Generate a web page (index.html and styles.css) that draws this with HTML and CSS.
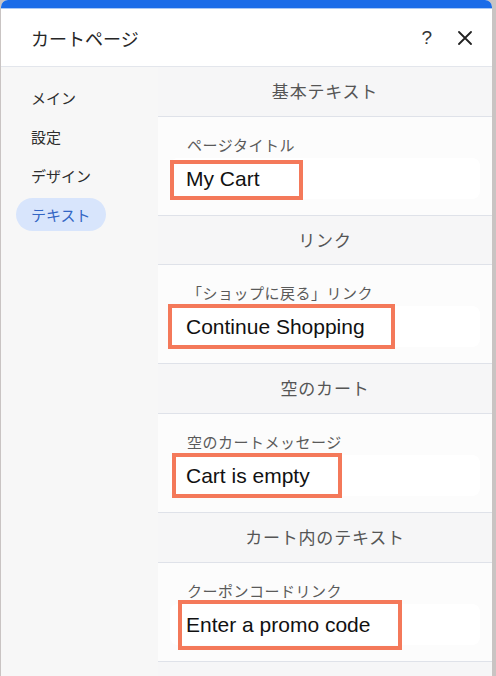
FILE: index.html
```html
<!DOCTYPE html>
<html lang="ja">
<head>
    <meta charset="UTF-8">
    <meta name="viewport" content="width=device-width, initial-scale=1.0">
    <title>カートページ</title>
    <link rel="stylesheet" href="styles.css">
</head>
<body>
    <div class="panel">
        <div class="panel-bar"></div>

        <div class="header">
            <h1 class="title">カートページ</h1>
            <div class="header-actions">
                <span class="help">?</span>
                <svg class="close" width="14" height="14" viewBox="0 0 14 14">
                    <path d="M1 1 L13 13 M13 1 L1 13" stroke="#222" stroke-width="1.8" stroke-linecap="round"/>
                </svg>
            </div>
        </div>

        <div class="content">
            <ul class="nav">
                <li class="nav-item">メイン</li>
                <li class="nav-item">設定</li>
                <li class="nav-item">デザイン</li>
                <li class="nav-item active">テキスト</li>
            </ul>

            <div class="sections">
                <div class="section-title">基本テキスト</div>
                <div class="field-row">
                    <div class="field-label">ページタイトル</div>
                    <div class="field">
                        My Cart
                        <span class="mark mark-1"></span>
                    </div>
                </div>

                <div class="section-title">リンク</div>
                <div class="field-row">
                    <div class="field-label">「ショップに戻る」リンク</div>
                    <div class="field">
                        Continue Shopping
                        <span class="mark mark-2"></span>
                    </div>
                </div>

                <div class="section-title">空のカート</div>
                <div class="field-row">
                    <div class="field-label">空のカートメッセージ</div>
                    <div class="field">
                        Cart is empty
                        <span class="mark mark-3"></span>
                    </div>
                </div>

                <div class="section-title">カート内のテキスト</div>
                <div class="field-row">
                    <div class="field-label">クーポンコードリンク</div>
                    <div class="field">
                        Enter a promo code
                        <span class="mark mark-4"></span>
                    </div>
                </div>

                <div class="section-title"></div>
            </div>
        </div>
    </div>
</body>
</html>
```

FILE: styles.css
```css
body {
    margin: 0;
    background-color: #c9c4c3;
    font-family: "Noto Sans CJK JP", "Liberation Sans", sans-serif;
    overflow: hidden;
}
.panel {
    margin-left: 1px;
    width: 491px;
    height: 676px;
    background-color: white;
    border-radius: 7px 7px 0 0;
    overflow: hidden;
    display: flex;
    flex-direction: column;
}
.panel-bar {
    flex-shrink: 0;
    height: 8px;
    background-color: #1b6ce8;
    border-bottom: 1px solid #a9c8f5;
}
.header {
    flex-shrink: 0;
    height: 57px;
    display: flex;
    align-items: center;
    justify-content: space-between;
    padding: 0 20px 0 30px;
    border-bottom: 1px solid #e3e6ec;
}
.title {
    margin: 0;
    font-size: 18px;
    font-weight: normal;
    color: #262626;
}
.header-actions {
    display: flex;
    align-items: center;
    gap: 26px;
}
.help {
    font-family: "Liberation Sans", sans-serif;
    font-size: 19px;
    color: #333;
}
.content {
    flex: 1;
    min-height: 0;
    overflow: hidden;
    display: grid;
    grid-template-columns: 157px 1fr;
}
.nav {
    list-style: none;
    margin: 0;
    padding: 14px 0 0 15px;
    background-color: #f7f7f7;
    display: flex;
    flex-direction: column;
    align-items: flex-start;
    gap: 6px;
}
.nav-item {
    height: 33px;
    line-height: 33px;
    padding: 0 15px;
    border-radius: 17px;
    font-size: 15px;
    color: #2e2e2e;
}
.nav-item.active {
    background-color: #d8e5fc;
    color: #3366c4;
}
.sections {
    background-color: #fcfcfc;
}
.section-title {
    height: 48.7px;
    line-height: 48.7px;
    text-align: center;
    font-size: 17px;
    letter-spacing: 0.8px;
    color: #555;
    background-color: #f6f6f7;
    border-bottom: 1px solid #dfe2e9;
}
.field-row {
    height: 99px;
    padding: 18px 12px 0 12px;
    box-sizing: border-box;
    border-bottom: 1px solid #dfe2e9;
}
.field-label {
    padding-left: 17px;
    height: 20px;
    line-height: 20px;
    font-size: 15px;
    letter-spacing: 0.5px;
    color: #5a5a5a;
}
.field {
    position: relative;
    margin-top: 3px;
    height: 41px;
    line-height: 41px;
    padding-left: 16px;
    background-color: white;
    border-radius: 8px;
    font-family: "Liberation Sans", sans-serif;
    font-size: 21px;
    color: #111;
}

/* coral highlight boxes drawn over the text fields */
.mark {
    position: absolute;
    border: 4px solid #f4795a;
    box-sizing: border-box;
}
.mark-1 {
    left: 0;
    top: 2px;
    width: 133px;
    height: 40px;
}
.mark-2 {
    left: -2px;
    top: -2px;
    width: 227px;
    height: 45px;
}
.mark-3 {
    left: 2px;
    top: -2px;
    width: 170px;
    height: 45px;
}
.mark-4 {
    left: 8px;
    top: -4px;
    width: 224px;
    height: 50px;
}
```
